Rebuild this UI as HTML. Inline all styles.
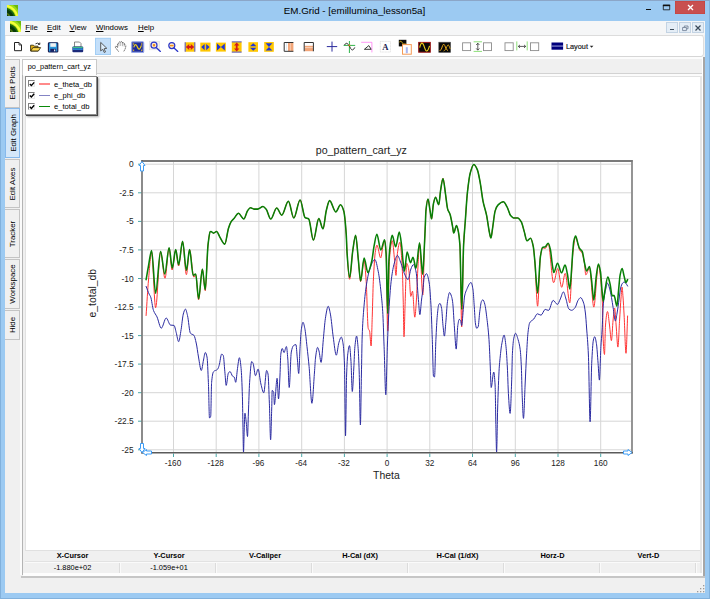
<!DOCTYPE html>
<html>
<head>
<meta charset="utf-8">
<title>EM.Grid - [emillumina_lesson5a]</title>
<style>
html,body{margin:0;padding:0;}
body{width:710px;height:599px;overflow:hidden;background:#9ccaf2;font-family:"Liberation Sans",sans-serif;color:#000;position:relative;}
.a{position:absolute;}
#title{position:absolute;left:0;top:3.5px;width:709px;text-align:center;font-size:9.8px;line-height:14px;color:#000;}
.mi{position:absolute;top:21.5px;font-size:7.9px;line-height:12px;color:#000;white-space:nowrap;}
.vt{position:absolute;left:5.4px;width:14.4px;background:#f0f0f0;border:1px solid #c4c4c4;border-left:none;box-sizing:border-box;}
.vt span{position:absolute;left:7.5px;top:50%;white-space:nowrap;font-size:7.9px;line-height:10px;transform:translate(-50%,-50%) rotate(-90deg);}
.st{position:absolute;font-size:7.4px;line-height:10px;white-space:nowrap;transform:translateX(-50%);}
.sth{font-weight:bold;}
.lg{position:absolute;left:54px;font-size:7.6px;line-height:10px;white-space:nowrap;}
.cb{position:absolute;left:28px;width:7px;height:7px;background:#fff;border-top:1px solid #808080;border-left:1px solid #808080;border-right:1px solid #e8e8e8;border-bottom:1px solid #e8e8e8;box-sizing:border-box;}
svg{position:absolute;overflow:visible;}
svg text{font-family:"Liberation Sans",sans-serif;}
</style>
</head>
<body>
<!-- window frame -->
<div class="a" style="left:0;top:0;width:710px;height:599px;box-sizing:border-box;border:1px solid #82b1dc;border-top-color:#8ba6c8;"></div>
<div id="title">EM.Grid - [emillumina_lesson5a]</div>
<!-- title icon -->
<svg style="left:6.7px;top:4.6px" width="11" height="11" viewBox="0 0 11 11"><defs><clipPath id="ic1"><rect width="11" height="11"/></clipPath></defs><g clip-path="url(#ic1)"><rect width="11" height="11" fill="#6cb80c"/><circle cx="-3" cy="14" r="16.5" fill="#9adc18"/><circle cx="-3" cy="14" r="14.6" fill="#f4ff3c"/><circle cx="-3" cy="14" r="12.4" fill="#c0e418"/><circle cx="-3" cy="14" r="11.6" fill="#1c6a10"/><circle cx="-3" cy="14" r="10" fill="#083a08"/><circle cx="-3" cy="14" r="7" fill="#4e7212"/><circle cx="-3" cy="14" r="5.4" fill="#0c3c0a"/></g></svg>
<!-- window controls -->
<div class="a" style="left:645.5px;top:8.6px;width:5.6px;height:1.8px;background:#111"></div>
<svg style="left:662px;top:4px" width="9" height="7" viewBox="0 0 9 7"><path d="M1.3 1.2H7.7V5.8H1.3Z" fill="none" stroke="#111" stroke-width="0.8"/><rect x="0.9" y="0.7" width="7.2" height="1.5" fill="#111"/></svg>
<div class="a" style="left:675px;top:1px;width:30px;height:12.8px;background:#c85050;box-shadow:inset 0 0 0 0.6px #c3433f;"></div>
<svg style="left:687px;top:4px" width="7" height="7" viewBox="0 0 7 7"><path d="M1 1 L6 6 M6 1 L1 6" stroke="#fff" stroke-width="1.3" fill="none"/></svg>
<!-- client -->
<div class="a" style="left:5.4px;top:20.5px;width:699.4px;height:572.3px;background:#f0f0f0;"></div>
<!-- menubar -->
<div class="a" style="left:5.4px;top:20.5px;width:699.4px;height:14.5px;background:#f5f6f7;"></div>
<svg style="left:10px;top:21.2px" width="11" height="11" viewBox="0 0 11 11"><defs><clipPath id="ic2"><rect width="11" height="11"/></clipPath></defs><g clip-path="url(#ic2)"><rect width="11" height="11" fill="#6cb80c"/><circle cx="-3" cy="14" r="16.5" fill="#9adc18"/><circle cx="-3" cy="14" r="14.6" fill="#f4ff3c"/><circle cx="-3" cy="14" r="12.4" fill="#c0e418"/><circle cx="-3" cy="14" r="11.6" fill="#1c6a10"/><circle cx="-3" cy="14" r="10" fill="#083a08"/><circle cx="-3" cy="14" r="7" fill="#4e7212"/><circle cx="-3" cy="14" r="5.4" fill="#0c3c0a"/></g></svg>
<span class="mi" style="left:25.2px"><u>F</u>ile</span>
<span class="mi" style="left:47px"><u>E</u>dit</span>
<span class="mi" style="left:69.5px"><u>V</u>iew</span>
<span class="mi" style="left:96px"><u>W</u>indows</span>
<span class="mi" style="left:138px"><u>H</u>elp</span>
<!-- MDI buttons -->
<div class="a" style="left:666px;top:22px;width:12px;height:11px;background:#e4edf6;border:1px solid #c3d3e3;box-sizing:border-box;"></div>
<div class="a" style="left:679px;top:22px;width:12px;height:11px;background:#e4edf6;border:1px solid #c3d3e3;box-sizing:border-box;"></div>
<div class="a" style="left:692px;top:22px;width:12px;height:11px;background:#e4edf6;border:1px solid #c3d3e3;box-sizing:border-box;"></div>
<div class="a" style="left:670px;top:29px;width:4px;height:1px;background:#3b4a5a"></div>
<svg style="left:682px;top:24.5px" width="7" height="7" viewBox="0 0 7 7"><path d="M2.3 2.3 V1 H6 V3.8 H4.6 M0.6 2.5 H4.4 V5.6 H0.6Z" stroke="#6a7a90" stroke-width="0.8" fill="none"/></svg>
<svg style="left:695px;top:25px" width="6" height="6" viewBox="0 0 6 6"><path d="M0.5 0.5 L5.5 5.5 M5.5 0.5 L0.5 5.5" stroke="#3b4a5a" stroke-width="1.2" fill="none"/></svg>
<!-- toolbar background -->
<div class="a" style="left:5.4px;top:35px;width:699.4px;height:22px;background:#f0f0f0;"></div>
<div class="a" style="left:5.4px;top:35px;width:698px;height:1.1px;background:#dcdcdc;"></div>
<div class="a" style="left:5.8px;top:36.1px;width:697px;height:20px;background:#fff;border-radius:0 2px 2px 0;box-shadow:0 0.8px 0 #cdcdcd, 1px 0 0 #dedede;"></div>
<!-- left vertical tabs -->
<div class="vt" style="top:58.6px;height:49px;"><span>Edit Plots</span></div>
<div class="vt" style="top:108.4px;height:50px;background:#d4e7f9;border-color:#86b9ec;border-left:1px solid #86b9ec;"><span>Edit Graph</span></div>
<div class="vt" style="top:159px;height:49.2px;"><span>Edit Axes</span></div>
<div class="vt" style="top:209.2px;height:49.2px;"><span>Tracker</span></div>
<div class="vt" style="top:259.4px;height:49.4px;"><span>Workspace</span></div>
<div class="vt" style="top:309.6px;height:30px;"><span>Hide</span></div>
<!-- outer frame lines -->
<div class="a" style="left:5.4px;top:57px;width:697.6px;height:1.5px;background:#fcfcfc;"></div>
<div class="a" style="left:20px;top:59px;width:2px;height:516px;background:#fbfbfb;"></div>
<div class="a" style="left:22px;top:59px;width:1px;height:516px;background:#b4b4b4;"></div>
<div class="a" style="left:700px;top:76px;width:2px;height:498px;background:#e6e6e6;"></div>
<div class="a" style="left:702px;top:57px;width:1px;height:518px;background:#fff;"></div>
<div class="a" style="left:703px;top:57px;width:1.7px;height:521px;background:#a6a6a6;"></div>
<!-- doc tab -->
<div class="a" style="left:23px;top:73px;width:679px;height:1px;background:#d2d2d2;"></div>
<div class="a" style="left:23px;top:74px;width:679px;height:2px;background:#fbfbfb;"></div>
<div class="a" style="left:22px;top:59px;width:75px;height:16px;background:#fff;border:1px solid #c9c9c9;border-bottom:none;box-sizing:border-box;"></div>
<div class="a" style="left:27.7px;top:61.5px;font-size:7.4px;line-height:10px;white-space:nowrap;">po_pattern_cart_yz</div>
<!-- main white panel -->
<div class="a" style="left:25px;top:76px;width:675px;height:474px;background:#fff;border-left:1px solid #e2e2e2;border-top:1px solid #e2e2e2;box-sizing:border-box;"></div>
<!-- cursor read-out table -->
<div class="a" style="left:25px;top:550px;width:675px;height:24px;background:#f0f0f0;"></div>
<div class="a" style="left:25px;top:550px;width:675px;height:1px;background:#e0e0e0;"></div>
<div class="a" style="left:25px;top:561px;width:675px;height:1px;background:#e2e2e2;"></div>
<div class="a" style="left:25px;top:562px;width:675px;height:1px;background:#fafafa;"></div>
<div class="a" style="left:119px;top:563px;width:1px;height:10px;background:#dcdcdc;"></div><div class="a" style="left:120px;top:563px;width:1px;height:10px;background:#fafafa;"></div>
<div class="a" style="left:215px;top:563px;width:1px;height:10px;background:#dcdcdc;"></div><div class="a" style="left:216px;top:563px;width:1px;height:10px;background:#fafafa;"></div>
<div class="a" style="left:311px;top:563px;width:1px;height:10px;background:#dcdcdc;"></div><div class="a" style="left:312px;top:563px;width:1px;height:10px;background:#fafafa;"></div>
<div class="a" style="left:407px;top:563px;width:1px;height:10px;background:#dcdcdc;"></div><div class="a" style="left:408px;top:563px;width:1px;height:10px;background:#fafafa;"></div>
<div class="a" style="left:503px;top:563px;width:1px;height:10px;background:#dcdcdc;"></div><div class="a" style="left:504px;top:563px;width:1px;height:10px;background:#fafafa;"></div>
<div class="a" style="left:599px;top:563px;width:1px;height:10px;background:#dcdcdc;"></div><div class="a" style="left:600px;top:563px;width:1px;height:10px;background:#fafafa;"></div>
<div class="a" style="left:695px;top:563px;width:1px;height:10px;background:#dcdcdc;"></div><div class="a" style="left:696px;top:563px;width:1px;height:10px;background:#fafafa;"></div>
<span class="st sth" style="left:72.5px;top:551px">X-Cursor</span>
<span class="st sth" style="left:169px;top:551px">Y-Cursor</span>
<span class="st sth" style="left:265px;top:551px">V-Caliper</span>
<span class="st sth" style="left:360px;top:551px">H-Cal (dX)</span>
<span class="st sth" style="left:457.5px;top:551px">H-Cal (1/dX)</span>
<span class="st sth" style="left:552.5px;top:551px">Horz-D</span>
<span class="st sth" style="left:648.5px;top:551px">Vert-D</span>
<span class="st" style="left:72.5px;top:563px">-1.880e+02</span>
<span class="st" style="left:169px;top:563px">-1.059e+01</span>
<!-- bottom band + status bar -->
<div class="a" style="left:23px;top:573px;width:680px;height:2.5px;background:#fdfdfd;"></div>
<div class="a" style="left:21px;top:575.5px;width:684px;height:2.5px;background:#c6c6c6;"></div>
<div class="a" style="left:5.4px;top:578px;width:699.2px;height:14.7px;background:#f0f0f0;"></div>
<svg style="left:696.5px;top:585px" width="8" height="8" viewBox="0 0 8 8"><g fill="#9a9a9a"><rect x="6" y="0" width="1.3" height="1.3"/><rect x="3" y="3" width="1.3" height="1.3"/><rect x="6" y="3" width="1.3" height="1.3"/><rect x="0" y="6" width="1.3" height="1.3"/><rect x="3" y="6" width="1.3" height="1.3"/><rect x="6" y="6" width="1.3" height="1.3"/></g></svg>
<!-- legend -->
<div class="a" style="left:25px;top:76px;width:72px;height:38.5px;background:#fff;border:1px solid #8a8a8a;box-sizing:border-box;box-shadow:1px 1px 0 #444, 2px 2px 2px rgba(0,0,0,.35);"></div>
<div class="cb" style="top:80.4px"></div><div class="cb" style="top:91.8px"></div><div class="cb" style="top:103.2px"></div>
<svg style="left:28px;top:80px" width="8" height="30" viewBox="0 0 8 30"><g stroke="#000" stroke-width="1.4" fill="none"><path d="M1.8 4 L3.4 5.6 L6.2 2.4"/><path d="M1.8 15.4 L3.4 17 L6.2 13.8"/><path d="M1.8 26.8 L3.4 28.4 L6.2 25.2"/></g></svg>
<div class="a" style="left:39px;top:83.4px;width:11px;height:1.3px;background:#ff8a8a;"></div>
<div class="a" style="left:39px;top:94.8px;width:11px;height:1.3px;background:#8484c4;"></div>
<div class="a" style="left:39px;top:106.2px;width:11px;height:1.3px;background:#0a8a0a;"></div>
<span class="lg" style="top:79.6px">e_theta_db</span>
<span class="lg" style="top:91px">e_phi_db</span>
<span class="lg" style="top:102.4px">e_total_db</span>
<!-- toolbar icons -->
<svg style="left:0;top:0" width="710" height="599" viewBox="0 0 710 599">
<!-- new -->
<path d="M14.5 42.5H19L21.5 45V50.7H14.5Z" fill="#fff" stroke="#222" stroke-width="1"/>
<path d="M19 42.5V45H21.5" fill="none" stroke="#222" stroke-width="0.8"/>
<!-- open -->
<path d="M30.6 51V45.2H33.5L34.3 46.2H38V51Z" fill="#e8b416" stroke="#3a3210" stroke-width="0.9"/>
<path d="M30.8 51L32.8 47.6H40.6L38.4 51Z" fill="#ffd84a" stroke="#3a3210" stroke-width="0.9"/>
<path d="M35.5 43.8Q37.5 42.4 39.5 44M39.8 42.6V44.4H38" fill="none" stroke="#222" stroke-width="0.9"/>
<!-- save -->
<rect x="48.4" y="42.8" width="9.4" height="9.2" rx="0.8" fill="#2a97dc" stroke="#13194f" stroke-width="1.1"/>
<rect x="50.3" y="43.2" width="5.6" height="3.6" fill="#f2f2f2"/>
<rect x="50.3" y="48.8" width="5.8" height="3" fill="#1a2060"/>
<rect x="54" y="49.5" width="1.3" height="1.8" fill="#dfe8f5"/>
<!-- print -->
<path d="M74.5 47V42H79.5L81 43.5V47Z" fill="#fff" stroke="#6a6a6a" stroke-width="0.8"/>
<rect x="72.4" y="46.6" width="10.8" height="5.6" rx="1" fill="#1b2a7a"/>
<rect x="72.8" y="46.8" width="10" height="1.3" fill="#3fc08a"/>
<rect x="72.8" y="48.3" width="10" height="1.6" fill="#2f8fdc"/>
<!-- pointer (selected) -->
<rect x="95.5" y="38.3" width="15" height="16.2" fill="#c3dffa" stroke="#a2cef5" stroke-width="1"/>
<path d="M100.7 42.4V50.9L102.7 49.3L104.3 52.5L105.5 51.9L104 48.8L106.8 48.3Z" fill="#dcedfc" stroke="#4a4a4a" stroke-width="0.9" stroke-linejoin="round"/>
<!-- hand -->
<path d="M118.6 51.6L115.4 47.4Q115 46.1 116.3 46.3L117.6 47.6V43.7Q118.2 42.7 118.9 43.5V42.5Q119.8 41.3 120.7 42.3V42Q121.6 41.1 122.5 42.1V42.9Q123.5 42.1 124.2 43.3V44.8Q125.3 44.2 125.8 45.6Q125.8 48.6 123.6 51.6" fill="#fff" stroke="#3c3c3c" stroke-width="0.75" stroke-linejoin="round" stroke-dasharray="1.6 0.5"/>
<path d="M118.9 43.6V46.2M120.7 42.4V46M122.5 42.4V46.2M124.2 43.6V46.6" fill="none" stroke="#777" stroke-width="0.5"/>
<!-- sine in blue box -->
<rect x="131.5" y="41.7" width="12.2" height="10.8" rx="1" fill="#1c2b9c" stroke="#96a6ea" stroke-width="1.1"/>
<rect x="132.6" y="42.8" width="10" height="8.6" fill="none" stroke="#6a76b8" stroke-width="0.5"/>
<path d="M133.8 47.4Q135.4 42.2 137.4 47Q139.4 52 141.4 45.4" fill="none" stroke="#f2d21a" stroke-width="1.2"/>
<g fill="#f2c21a"><rect x="133" y="43.4" width="1.2" height="1.2"/><rect x="141" y="43.4" width="1.2" height="1.2"/><rect x="133" y="49.6" width="1.2" height="1.2"/><rect x="141" y="49.6" width="1.2" height="1.2"/></g>
<!-- zoom in -->
<rect x="149.4" y="41.2" width="10" height="8.6" fill="#f1f1f1" stroke="#dcdcdc" stroke-width="0.6"/>
<circle cx="154" cy="45.2" r="3" fill="#fdeccc" stroke="#2a35c8" stroke-width="1.2"/>
<rect x="152.9" y="44.1" width="2.2" height="2.2" fill="#f08a1a"/>
<path d="M156.2 47.6L160.4 51.4" stroke="#2a35c8" stroke-width="1.3" stroke-linecap="round"/>
<!-- zoom out -->
<circle cx="171.8" cy="45.6" r="3" fill="#fdeccc" stroke="#2a35c8" stroke-width="1.2"/>
<rect x="170" y="44.9" width="3.6" height="1.4" fill="#f0901a"/>
<path d="M174 48L177.8 51.4" stroke="#2a35c8" stroke-width="1.3" stroke-linecap="round"/>
<!-- yellow buttons -->
<g>
<rect x="184.8" y="42.3" width="10.4" height="9.4" fill="#ffc700"/>
<path d="M185.2 42.3V51.7M194.8 42.3V51.7" stroke="#5058e8" stroke-width="1"/>
<path d="M185.8 47L189.2 44V46H190.8V44L194.2 47L190.8 50V48H189.2V50Z" fill="#d21a1a"/>
<rect x="200.3" y="42.6" width="10.2" height="9" fill="#ffc700"/>
<path d="M201.2 47.1L204.6 43.9V50.3ZM209.6 47.1L206.2 43.9V50.3Z" fill="#1f36d8"/>
<rect x="215.9" y="42.6" width="10" height="9" fill="#ffc700"/>
<path d="M220.9 47.1L217 43.6V50.6ZM220.9 47.1L224.8 43.6V50.6Z" fill="#1f36d8"/>
<rect x="231.8" y="41.6" width="9.8" height="10.8" fill="#ffc700"/>
<path d="M231.8 41.9H241.6M231.8 52.1H241.6" stroke="#5058e8" stroke-width="1"/>
<path d="M236.7 42.6L239.4 45.4H237.6V48.6H239.4L236.7 51.4L234 48.6H235.8V45.4H234Z" fill="#d21a1a"/>
<rect x="248.4" y="42.2" width="9.6" height="9.6" fill="#ffc700"/>
<path d="M253.2 43.2L256.4 46.2H250ZM253.2 50.8L256.4 47.8H250Z" fill="#1f36d8"/>
<rect x="264.2" y="42" width="9.6" height="9.8" fill="#ffc700"/>
<path d="M269 46.9L265.6 43.2H272.4ZM269 46.9L265.6 50.6H272.4Z" fill="#1f36d8"/>
</g>
<!-- frame icons -->
<rect x="284.2" y="42.5" width="9" height="8.8" fill="#fff"/>
<rect x="288" y="42.8" width="5.4" height="8.4" fill="#f2a578"/>
<path d="M290.4 42.8V51.2" stroke="#fbd9c4" stroke-width="0.7"/>
<path d="M293.4 42.5H284.2V51.3H293.4" fill="none" stroke="#333" stroke-width="1"/>
<path d="M286.6 43V51" stroke="#c9d6e2" stroke-width="0.6"/>
<rect x="304.2" y="42.5" width="9.2" height="8.8" fill="#fff"/>
<rect x="304.6" y="45.8" width="8.4" height="5.4" fill="#f2a578"/>
<path d="M304.6 47.6H313" stroke="#fbe6d8" stroke-width="0.7"/>
<path d="M304.2 51.3V42.5H313.4V51.3" fill="none" stroke="#333" stroke-width="1"/>
<!-- plus -->
<path d="M332 41.6V51.6M326.8 46.6H337.2" stroke="#2b2b9c" stroke-width="1"/>
<!-- cross + sine -->
<path d="M349.4 41V53M343.7 45.4H355.2" stroke="#2fb44a" stroke-width="1"/>
<path d="M344.4 45.2Q346.2 41.8 348.2 44.4Q349.6 46 350.6 48.4Q352.6 52 354.8 47.4" fill="none" stroke="#222" stroke-width="0.9"/>
<rect x="348.6" y="44.6" width="1.6" height="1.6" fill="#f07a1a"/>
<!-- magenta corner w/ triangle -->
<path d="M361.2 42.3H371.9V52.4" fill="none" stroke="#ff6cf2" stroke-width="0.7"/>
<path d="M364.4 49.3L368.8 45.6L371.2 49.3Z" fill="none" stroke="#222" stroke-width="0.9"/>
<!-- A box -->
<rect x="380.3" y="41.4" width="10.2" height="10.6" fill="#fff" stroke="#d0d0d0" stroke-width="0.6" stroke-dasharray="1 0.5"/>
<text x="385.4" y="49.8" style="font-family:'Liberation Serif',serif;font-weight:bold" font-size="8.6" text-anchor="middle" fill="#1a2050">A</text>
<!-- black/orange -->
<rect x="398.8" y="39.8" width="7.6" height="6.6" fill="#0a0a0a"/>
<path d="M399.4 42Q400.8 40 402 42.4Q403.4 45.4 405.6 43.8" fill="none" stroke="#f2c81a" stroke-width="0.9"/>
<rect x="402.5" y="44.6" width="8.8" height="9.6" fill="#fff" stroke="#f59a55" stroke-width="1"/>
<rect x="405.8" y="47.2" width="2" height="6" fill="#a9b6f0"/>
<!-- red border black sine -->
<rect x="418.7" y="42.4" width="11.6" height="9.8" fill="#0a0a0a" stroke="#9c1414" stroke-width="1"/>
<path d="M419.7 47.6Q421.8 38.8 424.4 47.2Q426.8 55.4 429.5 45.8" fill="none" stroke="#f2d21a" stroke-width="1.1"/>
<!-- black gaussian -->
<rect x="438.8" y="42.2" width="11.8" height="10.2" fill="#0a0a0a" stroke="#555" stroke-width="0.6"/>
<path d="M439.6 51Q441.6 50 442.6 45.6Q443.6 42.6 444.8 45.6Q446 50 448 50.6" fill="none" stroke="#e8a81a" stroke-width="1"/>
<path d="M443.6 51Q445.8 50.4 447 46.4Q448 43.6 449 45.6L450.2 49" fill="none" stroke="#c89a1a" stroke-width="0.9"/>
<!-- box / v-arrows / box -->
<g fill="#fff" stroke="#8c8c8c" stroke-width="0.9">
<rect x="462.6" y="42.8" width="8" height="7.8"/><rect x="483.5" y="42.8" width="8" height="7.8"/>
<rect x="505" y="42.8" width="8.2" height="7.8"/><rect x="530.5" y="42.8" width="8.2" height="7.8"/>
</g>
<path d="M473.6 41.8H482M473.6 51.4H482" stroke="#8ee07a" stroke-width="1"/>
<path d="M477.8 43.4V50M476.2 45L477.8 43.2L479.4 45M476.2 48.4L477.8 50.2L479.4 48.4" fill="none" stroke="#333" stroke-width="0.8"/>
<path d="M516.8 41.4V50.4M527.2 41.4V50.4" stroke="#8ee07a" stroke-width="1"/>
<path d="M518.4 46.4H525.6M520 44.9L518.3 46.4L520 47.9M524 44.9L525.7 46.4L524 47.9" fill="none" stroke="#333" stroke-width="0.8"/>
<!-- layout -->
<rect x="551.5" y="42.5" width="11.6" height="7.2" fill="#00007c"/>
<rect x="551.5" y="45.6" width="11.6" height="0.9" fill="#b4b8e8"/>
<text x="566" y="49" font-size="7.3" fill="#111" stroke="#111" stroke-width="0.15">Layout</text>
<path d="M589.8 45.8H593.4L591.6 47.8Z" fill="#222"/>
</svg>
<!-- chart -->
<svg style="left:0;top:0" width="710" height="599" viewBox="0 0 710 599">
<defs><clipPath id="pc"><rect x="142.5" y="162" width="489" height="290.6"/></clipPath></defs>
<path d="M173.5 162V452M216.2 162V452M258.9 162V452M301.7 162V452M344.4 162V452M387.1 162V452M429.8 162V452M472.5 162V452M515.3 162V452M558.0 162V452M600.7 162V452M143 164.2H631M143 192.8H631M143 221.4H631M143 249.9H631M143 278.5H631M143 307.0H631M143 335.6H631M143 364.1H631M143 392.7H631M143 421.2H631M143 449.8H631" stroke="#d6d6d6" stroke-width="1" fill="none"/>
<path d="M173.5 453.5V457M216.2 453.5V457M258.9 453.5V457M301.7 453.5V457M344.4 453.5V457M387.1 453.5V457M429.8 453.5V457M472.5 453.5V457M515.3 453.5V457M558.0 453.5V457M600.7 453.5V457M138 164.2H141.5M138 192.8H141.5M138 221.4H141.5M138 249.9H141.5M138 278.5H141.5M138 307.0H141.5M138 335.6H141.5M138 364.1H141.5M138 392.7H141.5M138 421.2H141.5M138 449.8H141.5" stroke="#4aa8a8" stroke-width="1" fill="none"/>
<g clip-path="url(#pc)" fill="none" stroke-linejoin="round" stroke-linecap="round">
<path d="M146.1 315.5C146.9 303.7 147.7 289.1 148.5 280.0C149.5 268.3 150.6 252.0 151.6 252.0C152.9 252.0 154.3 307.7 155.6 307.7C157.3 307.7 158.9 252.0 160.6 252.0C162.1 252.0 163.5 278.2 165.0 278.2C166.4 278.2 167.7 248.0 169.1 248.0C170.1 248.0 171.1 270.0 172.1 270.0C173.3 270.0 174.5 250.0 175.7 250.0C176.7 250.0 177.6 266.0 178.6 266.0C179.9 266.0 181.3 242.0 182.6 242.0C183.9 242.0 185.1 274.7 186.4 274.7C187.5 274.7 188.5 250.0 189.6 250.0C191.0 250.0 192.5 277.2 193.9 277.2C194.5 277.2 195.1 274.5 195.7 274.5C196.7 274.5 197.6 299.8 198.6 299.8C199.9 299.8 201.1 269.5 202.4 269.5C203.3 269.5 204.3 290.7 205.2 290.7C206.2 290.7 207.1 252.4 208.1 244.2C208.8 238.3 209.5 232.2 210.2 231.7C210.4 231.5 210.7 231.4 210.9 231.4C211.8 231.4 212.6 233.1 213.5 233.1C214.5 233.1 215.6 231.4 216.6 231.4C217.7 231.4 218.9 235.6 220.0 237.4C221.6 239.9 223.2 244.1 224.8 244.1C226.0 244.1 227.3 232.0 228.5 228.2C229.4 225.3 230.4 222.8 231.3 221.4C232.3 220.0 233.2 219.4 234.2 218.3C235.6 216.7 237.0 213.3 238.4 213.3C240.2 213.3 242.0 219.0 243.8 219.0C245.1 219.0 246.4 212.2 247.7 210.5C248.6 209.2 249.6 207.7 250.5 207.7C251.7 207.7 252.8 209.1 254.0 209.1C255.2 209.1 256.4 209.1 257.6 209.1C259.4 209.1 261.2 206.5 263.0 206.5C264.0 206.5 265.1 207.9 266.1 209.1C267.7 210.9 269.2 219.0 270.8 219.0C272.8 219.0 274.7 207.9 276.7 207.9C278.4 207.9 280.0 215.2 281.7 215.2C283.9 215.2 286.2 201.3 288.4 201.3C290.2 201.3 292.0 218.0 293.8 218.0C295.9 218.0 298.0 199.9 300.1 199.9C301.8 199.9 303.4 216.5 305.1 217.6C306.3 218.4 307.5 218.2 308.7 219.0C310.3 220.1 311.8 240.1 313.4 240.1C315.2 240.1 317.0 218.6 318.8 218.6C320.2 218.6 321.6 228.9 323.0 228.9C324.1 228.9 325.2 214.8 326.3 210.5C327.4 206.2 328.5 200.6 329.6 200.6C331.7 200.6 333.7 211.9 335.8 211.9C337.4 211.9 338.9 204.8 340.5 204.8C341.6 204.8 342.7 207.5 343.8 211.2C344.6 213.9 345.4 222.7 346.2 233.9C346.5 238.1 346.8 248.9 347.1 253.4C347.9 265.8 348.8 279.3 349.6 279.3C350.7 279.3 351.7 257.5 352.8 250.5C353.7 244.4 354.7 236.0 355.6 236.0C356.5 236.0 357.5 252.0 358.4 260.5C359.1 267.2 359.9 281.5 360.6 281.5C361.8 281.5 362.9 260.0 364.1 260.0C364.8 260.0 365.5 271.6 366.2 281.7C366.9 291.3 367.5 326.0 368.2 328.3C368.7 329.9 369.1 329.6 369.6 331.1C370.1 332.8 370.6 346.0 371.1 346.0C371.5 346.0 371.9 326.7 372.3 315.0C372.6 305.3 373.0 288.7 373.3 281.7C374.0 266.3 374.8 254.8 375.5 250.5C376.0 247.8 376.4 245.1 376.9 245.1C378.2 245.1 379.4 257.9 380.7 257.9C381.5 257.9 382.2 249.0 383.0 246.0C383.6 243.8 384.1 240.5 384.7 240.5C385.2 240.5 385.6 246.7 386.1 254.0C386.7 262.8 387.2 331.1 387.8 331.1C388.3 331.1 388.7 274.0 389.2 265.0C389.7 256.0 390.1 251.2 390.6 248.0C391.1 244.4 391.7 240.6 392.2 240.6C393.0 240.6 393.8 253.0 394.6 260.5C395.1 264.9 395.5 275.4 396.0 275.4C396.5 275.4 396.9 256.8 397.4 253.4C398.2 247.3 399.1 242.3 399.9 242.3C400.7 242.3 401.6 255.7 402.4 271.8C402.7 277.0 402.9 289.4 403.2 300.0C403.5 310.6 403.7 336.8 404.0 336.8C404.4 336.8 404.7 314.3 405.1 304.2C405.6 289.5 406.2 263.3 406.7 263.3C407.4 263.3 408.1 266.4 408.8 270.0C409.5 273.4 410.1 296.4 410.8 296.4C411.4 296.4 411.9 291.2 412.5 291.2C413.3 291.2 414.0 317.2 414.8 317.2C415.3 317.2 415.9 307.7 416.4 300.0C416.9 293.3 417.3 278.1 417.8 270.0C418.4 259.6 419.0 244.0 419.6 244.0C420.7 244.0 421.7 295.0 422.8 295.0C423.3 295.0 423.8 263.4 424.3 250.0C424.6 242.0 424.9 235.0 425.2 228.0C425.5 221.8 425.7 212.6 426.0 210.0C426.7 203.5 427.3 199.0 428.0 199.0C428.6 199.0 429.3 206.1 429.9 209.6C430.5 212.7 431.0 218.9 431.6 218.9C432.2 218.9 432.8 206.8 433.4 204.0C434.1 200.7 434.8 197.2 435.5 197.2C436.6 197.2 437.7 204.7 438.8 204.7C439.4 204.7 439.9 194.8 440.5 191.2C441.3 185.9 442.2 178.4 443.0 178.4C443.8 178.4 444.7 188.5 445.5 194.0C446.2 198.7 446.9 206.4 447.6 208.9C448.4 211.8 449.3 212.0 450.1 214.6C450.9 217.2 451.8 222.3 452.6 226.7C453.0 228.6 453.3 233.0 453.7 233.0C454.6 233.0 455.6 225.5 456.5 225.5C457.1 225.5 457.6 228.3 458.2 230.9C458.8 233.5 459.3 237.1 459.9 245.0C460.5 253.4 461.1 326.9 461.7 326.9C462.3 326.9 463.0 258.3 463.6 245.0C464.2 233.1 464.7 228.8 465.3 221.0C466.0 211.3 466.7 199.1 467.4 192.6C468.4 183.7 469.3 176.3 470.3 172.8C471.5 168.6 472.6 164.5 473.8 164.5C475.0 164.5 476.2 167.1 477.4 169.9C478.3 172.1 479.3 177.7 480.2 182.7C481.1 187.7 482.1 196.5 483.0 201.1C484.2 207.1 485.4 209.5 486.6 215.3C487.5 219.8 488.5 228.0 489.4 232.3C489.9 234.6 490.4 238.0 490.9 238.0C491.5 238.0 492.0 231.6 492.6 228.1C493.4 222.9 494.3 213.8 495.1 211.1C496.0 208.0 497.0 206.0 497.9 205.1C499.7 203.3 501.6 201.8 503.4 201.8C504.6 201.8 505.9 204.8 507.1 207.0C508.3 209.1 509.4 214.1 510.6 215.5C511.6 216.7 512.5 217.9 513.5 217.9C514.9 217.9 516.3 217.9 517.7 217.9C518.9 217.9 520.1 219.9 521.3 221.9C522.2 223.5 523.2 228.0 524.1 231.1C525.1 234.3 526.0 240.8 527.0 240.8C528.2 240.8 529.3 238.2 530.5 238.2C531.4 238.2 532.4 242.2 533.3 246.7C533.8 249.1 534.3 255.1 534.8 260.9C535.7 271.8 536.7 306.2 537.6 306.2C538.5 306.2 539.5 262.7 540.4 256.7C541.1 252.0 541.9 247.8 542.6 247.8C543.5 247.8 544.5 248.4 545.4 248.4C546.3 248.4 547.3 243.6 548.2 243.6C550.0 243.6 551.8 282.7 553.6 282.7C555.0 282.7 556.3 268.5 557.7 268.5C559.0 268.5 560.4 287.3 561.7 287.3C562.9 287.3 564.0 273.4 565.2 273.4C566.7 273.4 568.3 302.9 569.8 302.9C570.7 302.9 571.7 264.6 572.6 256.0C573.6 246.8 574.6 237.0 575.6 237.0C576.4 237.0 577.2 241.6 578.0 244.3C578.5 245.9 578.9 248.6 579.4 249.6C580.4 251.7 581.3 251.5 582.3 253.6C583.0 255.1 583.7 258.8 584.4 263.0C584.9 265.8 585.3 274.9 585.8 274.9C587.0 274.9 588.3 268.0 589.5 268.0C590.9 268.0 592.4 307.1 593.8 307.1C595.3 307.1 596.9 265.0 598.4 265.0C599.3 265.0 600.1 273.8 601.0 282.0C601.3 285.1 601.7 290.7 602.0 296.0C602.2 298.7 602.3 300.4 602.5 305.0C602.7 309.6 602.8 331.0 603.0 335.0C603.5 347.0 604.0 354.5 604.5 354.5C604.8 354.5 605.2 328.9 605.5 325.0C606.2 317.1 606.8 311.5 607.5 311.5C608.2 311.5 608.8 320.1 609.5 325.0C610.1 329.7 610.8 340.6 611.4 340.6C612.0 340.6 612.5 325.4 613.1 320.0C613.6 315.2 614.1 308.0 614.6 308.0C615.1 308.0 615.6 319.1 616.1 325.0C616.7 332.1 617.3 347.1 617.9 347.1C618.5 347.1 619.0 329.0 619.6 320.0C620.1 312.6 620.5 303.6 621.0 298.0C621.4 293.6 621.7 287.1 622.1 287.1C622.4 287.1 622.7 293.1 623.0 297.0C623.4 301.8 623.7 308.4 624.1 315.0C624.7 326.3 625.4 353.3 626.0 353.3C626.5 353.3 627.1 328.4 627.6 316.0" stroke="#ff3434" stroke-width="1"/>
<path d="M146.1 286.4C147.1 289.0 148.2 292.1 149.2 294.2C149.7 295.2 150.1 295.5 150.6 296.7C151.6 299.1 152.5 307.9 153.5 310.5C154.7 313.6 155.8 314.4 157.0 316.9C158.4 320.0 159.9 328.2 161.3 328.2C162.9 328.2 164.6 318.0 166.2 318.0C167.6 318.0 169.1 324.9 170.5 325.1C171.7 325.3 172.8 325.2 174.0 325.4C174.7 325.5 175.5 329.9 176.2 332.5C177.0 335.3 177.8 341.7 178.6 341.7C179.4 341.7 180.3 334.4 181.1 329.6C181.8 325.4 182.6 316.6 183.3 314.0C184.0 311.6 184.7 309.1 185.4 309.1C186.1 309.1 186.8 312.7 187.5 315.5C188.5 319.4 189.4 332.1 190.4 333.2C191.6 334.5 192.7 334.1 193.9 335.3C194.7 336.1 195.4 339.7 196.2 343.0C197.0 346.3 197.7 352.9 198.5 357.0C199.4 362.0 200.4 370.5 201.3 370.5C202.0 370.5 202.8 363.3 203.5 360.0C204.1 357.3 204.7 352.5 205.3 352.5C205.9 352.5 206.4 354.3 207.0 357.0C207.5 359.2 207.9 371.6 208.4 382.6C208.8 391.2 209.1 418.0 209.5 418.0C209.9 418.0 210.3 417.4 210.7 416.3C211.0 415.4 211.3 385.9 211.6 382.6C212.2 375.9 212.8 372.7 213.4 371.9C214.8 370.0 216.3 370.8 217.7 369.1C218.2 368.6 218.6 367.0 219.1 365.5C220.0 362.8 220.8 354.1 221.7 354.1C222.2 354.1 222.8 354.7 223.3 355.6C223.8 356.5 224.3 366.1 224.8 371.2C225.3 376.0 225.7 385.4 226.2 385.4C226.9 385.4 227.6 374.5 228.3 373.3C228.9 372.3 229.4 371.5 230.0 371.5C230.9 371.5 231.7 375.5 232.6 376.2C233.2 376.7 233.7 376.6 234.3 377.2C234.8 377.7 235.2 382.3 235.7 382.3C236.3 382.3 236.9 372.3 237.5 368.4C238.1 364.3 238.8 357.7 239.4 357.7C240.0 357.7 240.5 362.7 241.1 368.4C241.5 372.7 242.0 382.5 242.4 396.7C242.6 402.2 242.7 414.5 242.9 423.0C243.1 433.2 243.3 452.5 243.5 452.5C243.7 452.5 244.0 436.4 244.2 430.0C244.4 423.6 244.7 413.2 244.9 413.2C245.4 413.2 245.8 418.9 246.3 423.0C246.7 426.5 247.1 436.5 247.5 436.5C247.8 436.5 248.1 420.7 248.4 413.0C248.8 402.7 249.2 388.6 249.6 382.6C250.3 372.1 251.0 361.6 251.7 361.6C252.2 361.6 252.6 362.5 253.1 363.4C253.9 365.0 254.7 375.7 255.5 375.7C256.4 375.7 257.2 369.1 258.1 369.1C259.0 369.1 260.0 380.4 260.9 384.0C261.9 387.7 262.8 392.8 263.8 392.8C264.7 392.8 265.7 370.5 266.6 370.5C267.1 370.5 267.5 371.9 268.0 374.0C268.5 376.1 268.9 392.1 269.4 403.8C269.8 413.8 270.2 439.8 270.6 439.8C271.0 439.8 271.3 420.9 271.7 409.0C271.9 403.6 272.0 390.4 272.2 390.4C272.7 390.4 273.2 391.1 273.7 392.5C273.9 393.2 274.2 404.7 274.4 404.7C275.3 404.7 276.2 378.3 277.1 378.3C277.6 378.3 278.0 398.9 278.5 398.9C279.0 398.9 279.5 385.1 280.0 375.0C280.3 369.6 280.5 356.1 280.8 354.2C281.3 350.6 281.8 348.5 282.3 348.5C282.9 348.5 283.4 352.6 284.0 352.6C284.8 352.6 285.6 346.5 286.4 346.5C286.9 346.5 287.3 353.2 287.8 359.0C288.3 364.8 288.7 387.5 289.2 387.5C289.9 387.5 290.6 355.5 291.3 352.0C292.0 348.3 292.8 346.1 293.5 345.6C294.3 345.0 295.1 344.6 295.9 344.6C296.4 344.6 296.8 353.3 297.3 358.1C297.8 362.9 298.2 373.5 298.7 373.5C299.2 373.5 299.6 354.3 300.1 346.7C300.5 340.2 300.9 332.4 301.3 329.7C301.9 325.8 302.4 322.3 303.0 322.3C303.6 322.3 304.2 325.5 304.8 328.3C305.5 331.7 306.3 340.2 307.0 346.7C307.7 352.9 308.4 359.0 309.1 366.6C310.0 376.8 311.0 403.3 311.9 403.3C312.8 403.3 313.6 383.3 314.5 372.0C314.8 367.7 315.2 360.7 315.5 358.1C316.2 352.6 316.9 347.4 317.6 347.4C318.1 347.4 318.5 349.4 319.0 351.0C319.7 353.4 320.4 362.4 321.1 362.4C321.8 362.4 322.6 347.1 323.3 339.6C324.0 332.4 324.7 322.7 325.4 318.4C326.3 312.6 327.3 306.3 328.2 306.3C328.9 306.3 329.7 310.5 330.4 314.1C331.3 318.6 332.3 330.4 333.2 336.8C334.2 343.9 335.3 355.2 336.3 355.2C337.2 355.2 338.0 345.2 338.9 342.5C339.7 340.0 340.5 337.1 341.3 337.1C341.9 337.1 342.5 340.2 343.1 343.9C343.6 346.8 344.0 353.0 344.5 365.0C344.8 373.6 345.2 435.9 345.5 435.9C345.9 435.9 346.2 384.9 346.6 375.0C347.0 364.2 347.4 356.9 347.8 353.8C348.4 349.4 348.9 345.6 349.5 345.6C350.0 345.6 350.4 353.4 350.9 360.0C351.4 366.6 351.8 391.5 352.3 391.5C352.8 391.5 353.3 376.7 353.8 368.0C354.2 361.6 354.5 350.3 354.9 346.7C355.5 341.2 356.0 336.1 356.6 336.1C357.1 336.1 357.5 341.4 358.0 346.7C358.4 351.2 358.8 360.6 359.2 372.0C359.6 383.4 360.0 425.0 360.4 425.0C360.7 425.0 361.1 391.4 361.4 375.0C361.7 361.8 361.9 343.2 362.2 336.0C362.7 322.6 363.2 316.3 363.7 310.0C364.5 299.9 365.3 292.3 366.1 287.0C367.3 278.9 368.6 272.4 369.8 269.0C371.5 264.3 373.1 259.5 374.8 259.5C376.0 259.5 377.1 266.1 378.3 271.8C379.2 276.3 380.2 284.4 381.1 293.1C381.6 298.1 382.2 302.9 382.7 311.3C383.2 318.7 383.6 334.3 384.1 346.7C384.7 361.8 385.2 394.8 385.8 394.8C386.3 394.8 386.9 359.0 387.4 345.0C387.9 331.9 388.4 319.5 388.9 311.0C389.6 298.5 390.4 287.9 391.1 281.7C392.0 273.8 393.0 268.2 393.9 264.7C395.1 260.4 396.2 255.5 397.4 255.5C398.6 255.5 399.8 260.3 401.0 263.3C402.2 266.2 403.3 271.5 404.5 273.9C405.7 276.4 406.9 279.6 408.1 279.6C409.0 279.6 410.0 271.2 410.9 269.0C411.7 267.0 412.6 264.6 413.4 264.6C414.3 264.6 415.2 267.9 416.1 272.0C416.8 275.2 417.5 289.3 418.2 297.0C418.8 303.3 419.3 314.6 419.9 314.6C420.4 314.6 421.0 304.3 421.5 300.0C422.0 295.9 422.5 293.2 423.0 289.0C423.4 285.7 423.8 278.8 424.2 277.6C425.0 275.2 425.7 273.7 426.5 273.7C427.4 273.7 428.3 277.9 429.2 283.0C429.8 286.2 430.3 294.6 430.9 304.2C431.4 312.1 431.8 326.6 432.3 339.6C432.7 350.7 433.1 375.8 433.5 376.3C433.8 376.7 434.2 377.0 434.5 377.0C435.0 377.0 435.4 349.4 435.9 339.6C436.4 329.8 436.8 320.4 437.3 315.5C437.8 310.6 438.2 305.8 438.7 304.9C439.1 304.0 439.6 303.4 440.0 303.4C440.5 303.4 441.1 305.7 441.6 308.4C442.1 310.8 442.5 321.1 443.0 325.5C443.5 329.9 443.9 336.1 444.4 336.1C444.9 336.1 445.3 327.6 445.8 322.6C446.4 316.5 446.9 305.2 447.5 301.5C448.2 297.0 448.9 292.5 449.6 292.5C450.2 292.5 450.9 294.5 451.5 296.4C451.9 297.5 452.2 299.2 452.6 301.7C453.2 305.6 453.7 318.0 454.3 325.5C454.9 333.8 455.6 349.1 456.2 349.1C456.7 349.1 457.3 329.0 457.8 325.5C458.3 322.4 458.7 319.4 459.2 319.4C459.7 319.4 460.1 319.8 460.6 320.5C460.9 321.0 461.3 325.5 461.6 325.5C462.2 325.5 462.9 313.3 463.5 307.0C463.9 303.4 464.2 297.8 464.6 296.0C465.3 292.5 466.0 291.2 466.7 289.6C468.1 286.4 469.6 282.5 471.0 282.5C471.7 282.5 472.4 285.9 473.1 290.3C473.4 292.4 473.8 299.5 474.1 304.2C474.6 310.7 475.0 321.4 475.5 324.0C475.9 326.3 476.3 328.3 476.7 328.3C477.2 328.3 477.6 327.7 478.1 326.9C478.7 325.9 479.2 315.4 479.8 311.3C480.4 307.2 480.9 302.3 481.5 301.3C482.0 300.5 482.4 299.8 482.9 299.8C483.5 299.8 484.2 302.0 484.8 304.2C485.5 306.6 486.2 312.7 486.9 318.4C487.6 324.1 488.3 329.7 489.0 339.6C489.4 345.3 489.8 356.3 490.2 365.0C490.5 372.3 490.9 387.5 491.2 387.5C492.0 387.5 492.9 372.0 493.7 372.0C494.2 372.0 494.6 377.1 495.1 385.0C495.4 389.5 495.6 415.4 495.9 426.8C496.1 436.8 496.4 452.3 496.6 452.3C496.9 452.3 497.3 421.0 497.6 410.0C498.1 392.5 498.7 376.8 499.2 368.3C499.4 365.1 499.6 363.0 499.8 360.9C500.5 354.0 501.1 347.4 501.8 343.9C502.6 339.8 503.3 335.1 504.1 335.1C504.7 335.1 505.4 341.1 506.0 346.7C506.5 350.9 506.9 359.0 507.4 368.0C507.7 374.4 508.1 387.9 508.4 393.4C509.0 402.8 509.5 413.4 510.1 413.4C510.7 413.4 511.2 393.1 511.8 376.7C512.0 370.9 512.2 357.5 512.4 353.8C512.9 345.1 513.3 340.4 513.8 338.2C514.4 335.6 514.9 333.3 515.5 333.3C516.4 333.3 517.2 336.8 518.1 339.6C518.8 341.9 519.5 344.3 520.2 349.6C520.6 352.7 521.0 359.1 521.4 368.0C521.6 373.2 521.9 387.6 522.1 393.4C522.6 405.0 523.0 418.4 523.5 418.4C524.0 418.4 524.6 396.1 525.1 385.0C525.6 374.6 526.1 362.5 526.6 353.8C527.1 345.6 527.5 336.6 528.0 332.6C528.5 328.0 529.1 324.0 529.6 323.0C531.0 320.4 532.4 320.6 533.8 319.0C535.0 317.6 536.2 313.8 537.4 313.8C538.6 313.8 539.8 315.2 541.0 315.2C542.4 315.2 543.8 309.4 545.2 309.4C546.3 309.4 547.4 310.4 548.5 310.4C550.1 310.4 551.6 300.4 553.2 300.4C554.6 300.4 556.0 304.4 557.4 304.4C558.4 304.4 559.3 301.0 560.3 299.0C561.3 296.9 562.4 291.9 563.4 291.9C564.3 291.9 565.1 296.3 566.0 299.0C566.9 301.9 567.9 308.1 568.8 308.9C569.7 309.7 570.7 310.3 571.6 310.3C572.8 310.3 574.0 309.0 575.2 307.5C576.1 306.4 577.1 301.8 578.0 300.4C578.9 299.1 579.7 297.6 580.6 297.6C581.6 297.6 582.7 300.2 583.7 303.2C584.3 304.8 584.8 308.4 585.4 313.0C585.8 316.2 586.2 322.6 586.6 328.0C587.2 336.1 587.8 341.9 588.4 355.0C589.0 367.4 589.5 421.8 590.1 421.8C590.6 421.8 591.2 374.1 591.7 363.4C592.3 352.0 592.8 342.4 593.4 340.0C593.8 338.2 594.3 336.7 594.7 336.7C595.3 336.7 595.8 340.1 596.4 343.4C597.0 346.7 597.5 356.4 598.1 363.4C598.5 368.7 599.0 380.1 599.4 380.1C599.9 380.1 600.4 355.2 600.9 346.7C601.3 339.9 601.7 336.8 602.1 330.0C602.5 323.7 602.8 310.6 603.2 306.0C603.5 301.8 603.9 299.3 604.2 297.0C604.6 294.1 605.1 292.0 605.5 290.1C606.2 287.2 606.8 283.1 607.5 283.1C608.2 283.1 608.8 285.9 609.5 288.1C610.2 290.3 610.8 293.9 611.5 297.5C612.0 300.4 612.6 304.3 613.1 307.5C613.9 312.1 614.6 320.9 615.4 320.9C616.0 320.9 616.5 316.1 617.1 313.0C617.8 309.3 618.4 303.8 619.1 299.0C619.6 295.4 620.1 290.0 620.6 288.1C621.3 285.6 621.9 283.8 622.6 283.1C623.1 282.6 623.6 282.1 624.1 282.1C624.8 282.1 625.4 282.9 626.1 283.6C626.6 284.1 627.1 285.3 627.6 286.1" stroke="#2a2aa0" stroke-width="1"/>
<path d="M146.1 279.6C146.9 275.1 147.7 270.2 148.5 266.0C149.5 260.5 150.6 250.6 151.6 250.6C152.9 250.6 154.3 293.1 155.6 293.1C157.3 293.1 158.9 251.6 160.6 251.6C162.0 251.6 163.4 274.0 164.8 274.0C166.2 274.0 167.7 247.7 169.1 247.7C170.2 247.7 171.2 268.0 172.3 268.0C173.4 268.0 174.6 249.6 175.7 249.6C176.7 249.6 177.6 264.8 178.6 264.8C179.9 264.8 181.3 241.3 182.6 241.3C183.9 241.3 185.1 270.4 186.4 270.4C187.5 270.4 188.5 249.6 189.6 249.6C190.8 249.6 192.0 275.4 193.2 275.4C194.0 275.4 194.9 274.0 195.7 274.0C196.7 274.0 197.6 298.8 198.6 298.8C199.9 298.8 201.1 269.0 202.4 269.0C203.3 269.0 204.3 289.6 205.2 289.6C206.2 289.6 207.1 252.3 208.1 244.2C208.8 238.3 209.5 232.2 210.2 231.7C210.4 231.5 210.7 231.4 210.9 231.4C211.8 231.4 212.6 233.1 213.5 233.1C214.5 233.1 215.6 231.4 216.6 231.4C217.7 231.4 218.9 235.6 220.0 237.4C221.6 239.9 223.2 244.1 224.8 244.1C226.0 244.1 227.3 232.0 228.5 228.2C229.4 225.3 230.4 222.8 231.3 221.4C232.3 220.0 233.2 219.4 234.2 218.3C235.6 216.7 237.0 213.3 238.4 213.3C240.2 213.3 242.0 219.0 243.8 219.0C245.1 219.0 246.4 212.2 247.7 210.5C248.6 209.2 249.6 207.7 250.5 207.7C251.7 207.7 252.8 209.1 254.0 209.1C255.2 209.1 256.4 209.1 257.6 209.1C259.4 209.1 261.2 206.5 263.0 206.5C264.0 206.5 265.1 207.9 266.1 209.1C267.7 210.9 269.2 219.0 270.8 219.0C272.8 219.0 274.7 207.9 276.7 207.9C278.4 207.9 280.0 215.2 281.7 215.2C283.9 215.2 286.2 201.3 288.4 201.3C290.2 201.3 292.0 218.0 293.8 218.0C295.9 218.0 298.0 199.9 300.1 199.9C301.8 199.9 303.4 216.5 305.1 217.6C306.3 218.4 307.5 218.2 308.7 219.0C310.3 220.1 311.8 240.1 313.4 240.1C315.2 240.1 317.0 218.6 318.8 218.6C320.2 218.6 321.6 228.9 323.0 228.9C324.1 228.9 325.2 214.8 326.3 210.5C327.4 206.2 328.5 200.6 329.6 200.6C331.7 200.6 333.7 211.9 335.8 211.9C337.4 211.9 338.9 204.8 340.5 204.8C341.6 204.8 342.7 207.5 343.8 211.2C344.6 213.9 345.4 222.7 346.2 233.9C346.5 238.1 346.8 249.1 347.1 253.4C347.9 265.2 348.8 277.5 349.6 277.5C350.7 277.5 351.7 257.5 352.8 250.5C353.7 244.4 354.7 235.3 355.6 235.3C356.5 235.3 357.5 251.9 358.4 260.5C359.1 267.2 359.9 281.0 360.6 281.0C361.8 281.0 362.9 258.0 364.1 258.0C365.4 258.0 366.6 272.5 367.9 272.5C369.2 272.5 370.6 266.3 371.9 260.5C372.6 257.5 373.3 249.9 374.0 246.3C375.0 241.3 375.9 234.3 376.9 234.3C378.2 234.3 379.5 250.0 380.8 250.0C382.1 250.0 383.3 239.8 384.6 239.8C385.1 239.8 385.6 246.1 386.1 253.4C386.6 261.1 387.2 313.4 387.7 313.4C388.1 313.4 388.5 267.9 388.9 260.5C389.4 251.2 389.9 246.7 390.4 243.4C391.0 239.5 391.6 235.3 392.2 235.3C393.4 235.3 394.5 246.8 395.7 246.8C396.9 246.8 398.1 232.1 399.3 232.1C400.1 232.1 400.9 239.9 401.7 246.3C402.2 250.0 402.6 258.0 403.1 261.9C403.6 265.8 404.0 271.1 404.5 271.1C405.4 271.1 406.2 252.0 407.1 252.0C408.2 252.0 409.4 262.6 410.5 262.6C411.3 262.6 412.2 257.2 413.0 257.2C414.0 257.2 415.0 268.3 416.0 268.3C417.2 268.3 418.4 242.7 419.6 242.7C420.6 242.7 421.7 274.3 422.7 274.3C423.2 274.3 423.7 259.4 424.2 250.0C424.5 243.7 424.9 235.4 425.2 228.0C425.5 222.1 425.7 212.6 426.0 210.0C426.7 203.5 427.3 199.0 428.0 199.0C428.6 199.0 429.3 206.1 429.9 209.6C430.5 212.7 431.0 218.9 431.6 218.9C432.2 218.9 432.8 206.8 433.4 204.0C434.1 200.7 434.8 197.2 435.5 197.2C436.6 197.2 437.7 204.7 438.8 204.7C439.4 204.7 439.9 194.8 440.5 191.2C441.3 185.9 442.2 178.4 443.0 178.4C443.8 178.4 444.7 188.5 445.5 194.0C446.2 198.7 446.9 206.4 447.6 208.9C448.4 211.8 449.3 212.0 450.1 214.6C450.9 217.2 451.8 222.3 452.6 226.7C453.0 228.6 453.3 233.0 453.7 233.0C454.6 233.0 455.6 225.5 456.5 225.5C457.1 225.5 457.6 228.3 458.2 230.9C458.8 233.5 459.3 237.4 459.9 245.0C460.5 253.0 461.1 309.3 461.7 309.3C462.3 309.3 463.0 257.5 463.6 245.0C464.2 233.8 464.7 228.8 465.3 221.0C466.0 211.3 466.7 199.1 467.4 192.6C468.4 183.7 469.3 176.3 470.3 172.8C471.5 168.6 472.6 164.5 473.8 164.5C475.0 164.5 476.2 167.1 477.4 169.9C478.3 172.1 479.3 177.7 480.2 182.7C481.1 187.7 482.1 196.5 483.0 201.1C484.2 207.1 485.4 209.5 486.6 215.3C487.5 219.8 488.5 228.0 489.4 232.3C489.9 234.6 490.4 238.0 490.9 238.0C491.5 238.0 492.0 231.6 492.6 228.1C493.4 222.9 494.3 213.8 495.1 211.1C496.0 208.0 497.0 206.0 497.9 205.1C499.7 203.3 501.6 201.8 503.4 201.8C504.6 201.8 505.9 204.8 507.1 207.0C508.3 209.1 509.4 214.1 510.6 215.5C511.6 216.7 512.5 217.9 513.5 217.9C514.9 217.9 516.3 217.9 517.7 217.9C518.9 217.9 520.1 219.9 521.3 221.9C522.2 223.5 523.2 228.0 524.1 231.1C525.1 234.3 526.0 240.8 527.0 240.8C528.2 240.8 529.3 238.2 530.5 238.2C531.4 238.2 532.4 242.2 533.3 246.7C533.8 249.1 534.3 255.8 534.8 260.9C535.7 270.5 536.7 293.0 537.6 293.0C538.5 293.0 539.5 262.5 540.4 256.7C541.1 252.1 541.9 247.8 542.6 247.4C543.5 246.9 544.5 247.1 545.4 246.7C546.3 246.3 547.3 243.2 548.2 243.2C548.9 243.2 549.7 246.4 550.4 249.6C551.0 252.2 551.6 260.0 552.2 263.8C552.7 267.2 553.3 272.5 553.8 272.5C555.0 272.5 556.3 263.2 557.5 263.2C558.8 263.2 560.2 272.8 561.5 272.8C562.7 272.8 563.9 265.0 565.1 265.0C565.9 265.0 566.6 270.3 567.4 274.0C568.2 277.8 569.0 289.0 569.8 289.0C570.4 289.0 571.0 277.0 571.6 269.2C571.9 264.9 572.3 258.0 572.6 253.8C573.0 248.8 573.4 242.9 573.8 241.1C574.4 238.4 575.0 236.1 575.6 236.1C576.4 236.1 577.2 241.4 578.0 243.9C578.5 245.4 578.9 247.3 579.4 248.2C580.4 250.0 581.3 249.8 582.3 251.7C583.0 253.1 583.7 259.2 584.4 262.3C585.1 265.6 585.9 271.0 586.6 271.0C587.6 271.0 588.5 266.5 589.5 266.5C590.2 266.5 590.8 274.5 591.5 279.5C592.3 285.3 593.0 300.2 593.8 300.2C594.5 300.2 595.3 284.0 596.0 278.5C596.8 272.5 597.6 264.0 598.4 264.0C599.1 264.0 599.8 267.8 600.5 272.0C601.0 275.0 601.5 284.9 602.0 290.1C602.4 294.2 602.8 301.1 603.2 301.1C603.8 301.1 604.4 293.3 605.0 290.1C605.9 285.1 606.9 277.1 607.8 277.1C608.6 277.1 609.3 281.0 610.1 284.1C610.8 286.8 611.4 295.6 612.1 295.6C612.8 295.6 613.4 295.6 614.1 295.6C615.0 295.6 616.0 306.1 616.9 306.1C617.5 306.1 618.0 295.6 618.6 290.1C619.1 285.2 619.6 277.6 620.1 275.1C620.8 271.7 621.4 268.5 622.1 268.5C622.8 268.5 623.4 273.6 624.1 276.1C624.7 278.3 625.3 282.6 625.9 282.6C626.5 282.6 627.0 280.6 627.6 279.6" stroke="#078007" stroke-width="1.55"/>
</g>
<path d="M141.5 161H632.5" stroke="#7a7a7a" stroke-width="2" fill="none"/>
<path d="M632 160V453.5" stroke="#7a7a7a" stroke-width="1.6" fill="none"/>
<path d="M142 160V453.5" stroke="#5a5a5a" stroke-width="1.4" fill="none"/>
<path d="M141.3 452.7H632.8" stroke="#5a5a5a" stroke-width="1.6" fill="none"/>
<g font-size="8.4" fill="#222" text-anchor="end">
<text x="133.7" y="167.2">0</text>
<text x="133.7" y="195.8">-2.5</text>
<text x="133.7" y="224.4">-5</text>
<text x="133.7" y="252.9">-7.5</text>
<text x="133.7" y="281.5">-10</text>
<text x="133.7" y="310.0">-12.5</text>
<text x="133.7" y="338.6">-15</text>
<text x="133.7" y="367.1">-17.5</text>
<text x="133.7" y="395.7">-20</text>
<text x="133.7" y="424.2">-22.5</text>
<text x="133.7" y="452.8">-25</text>
</g>
<g font-size="8.2" fill="#222" text-anchor="middle">
<text x="173.0" y="466.2">-160</text>
<text x="215.7" y="466.2">-128</text>
<text x="258.4" y="466.2">-96</text>
<text x="301.2" y="466.2">-64</text>
<text x="343.9" y="466.2">-32</text>
<text x="387.1" y="466.2">0</text>
<text x="429.8" y="466.2">32</text>
<text x="472.5" y="466.2">64</text>
<text x="515.3" y="466.2">96</text>
<text x="558.0" y="466.2">128</text>
<text x="600.7" y="466.2">160</text>
</g>
<text x="361.3" y="154.4" font-size="10.65" fill="#222" text-anchor="middle">po_pattern_cart_yz</text>
<text x="386.4" y="478.6" font-size="10.4" fill="#222" text-anchor="middle">Theta</text>
<text transform="translate(95.6 293.2) rotate(-90)" font-size="10.4" fill="#222" text-anchor="middle">e_total_db</text>
<g stroke="#3d9cf5" stroke-width="1" fill="#fff" stroke-linejoin="round">
<path d="M142 161.5L145 165.5H143.5V171H140.5V165.5H139Z"/>
<path d="M142 452.5L139 448.5H140.5V443.5H143.5V448.5H145Z"/>
<path d="M142.5 452.5L146.5 449.5V451H151.5V454H146.5V455.5Z"/>
<path d="M632 452.5L628 449.5V451H623.5V454H628V455.5Z"/>
</g>
</svg>

</body>
</html>
